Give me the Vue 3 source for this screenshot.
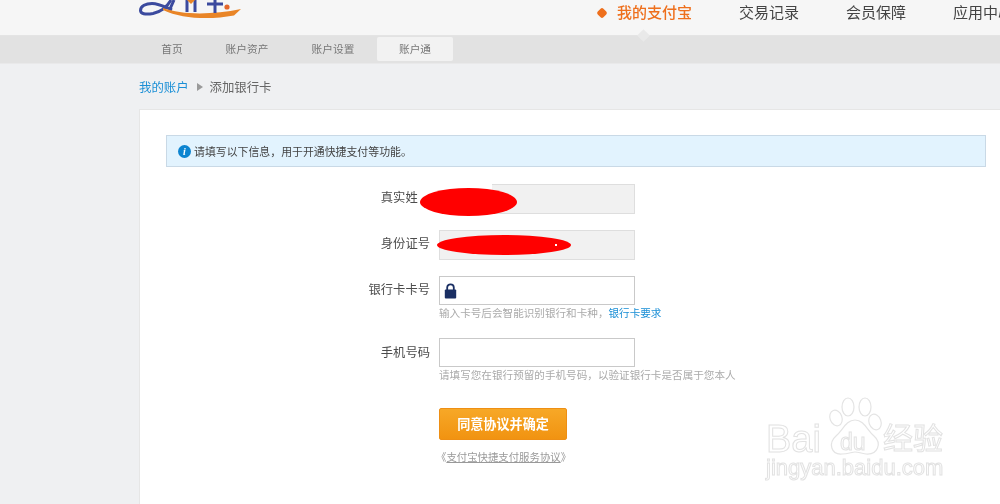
<script setup>
const primaryNav = ['交易记录', '会员保障', '应用中心']
const subNav = [
  { label: '首页', width: 44, gap: 31 },
  { label: '账户资产', width: 44, gap: 42 },
  { label: '账户设置', width: 44, gap: 22 },
  { label: '账户通', width: 76, gap: 0, active: true }
]
</script>

<template>
  <div class="page">
    <header class="top">
      <div class="logo">
        <svg width="104" height="20" viewBox="0 0 104 20">
          <path d="M33 0 C29 7 22 12 15 13.5 C7 15 2.5 13.5 2.5 10.5 C2.5 6 8 3.5 14 3.5 C21 3.5 27 7 34 10" fill="none" stroke="#3b4a9e" stroke-width="3" />
          <path d="M25 8 C44 15 74 15 103 9 L96 15.5 C72 20 44 19 25 10 Z" fill="#e98527" />
          <path d="M36 0 L32 9 M49 0 V12 M57 0 V12 M77 0 V13 M69 4 H85" fill="none" stroke="#3b4a9e" stroke-width="3" />
          <path d="M49 0 L53 4 L57 0 Z" fill="#e98527" />
          <circle cx="89" cy="7" r="2.6" fill="#e4672c" />
        </svg>
      </div>
      <nav class="primary">
        <span class="dot"></span>
        <a class="primary-item current">我的支付宝</a>
        <a v-for="item in primaryNav" :key="item" class="primary-item">{{ item }}</a>
        <i class="caret"></i>
      </nav>
    </header>

    <nav class="sub">
      <a
        v-for="item in subNav"
        :key="item.label"
        class="sub-item"
        :class="{ active: item.active }"
        :style="{ width: item.width + 'px', marginRight: item.gap + 'px' }"
      >{{ item.label }}</a>
    </nav>

    <div class="crumbs">
      <a class="crumb-link">我的账户</a>
      <i class="crumb-arrow"></i>
      <span>添加银行卡</span>
    </div>

    <main class="card">
      <div class="notice">
        <span class="info">i</span>
        <span>请填写以下信息，用于开通快捷支付等功能。</span>
      </div>

      <div class="row first">
        <label>真实姓名</label>
        <div class="field readonly"></div>
      </div>
      <div class="row">
        <label>身份证号</label>
        <div class="field readonly"></div>
      </div>
      <div class="row">
        <label>银行卡卡号</label>
        <div class="stack">
          <div class="field">
            <svg class="lock" width="13" height="16" viewBox="0 0 13 16">
              <path d="M3.2 7 V4.6 C3.2 2.6 4.6 1.4 6.5 1.4 C8.4 1.4 9.8 2.6 9.8 4.6 V7" fill="none" stroke="#1a2f63" stroke-width="1.8" />
              <rect x="0.8" y="6.4" width="11.4" height="9" rx="1" fill="#1a2f63" />
            </svg>
          </div>
          <p class="help">输入卡号后会智能识别银行和卡种，<a>银行卡要求</a></p>
        </div>
      </div>
      <div class="row phone">
        <label>手机号码</label>
        <div class="stack">
          <div class="field"></div>
          <p class="help">请填写您在银行预留的手机号码，以验证银行卡是否属于您本人</p>
        </div>
      </div>
      <div class="actions">
        <button type="button" class="submit">同意协议并确定</button>
        <a class="terms">《<u>支付宝快捷支付服务协议</u>》</a>
      </div>
    </main>

    <div class="erase"></div>
    <div class="scribble one"></div>
    <div class="scribble two"><i></i></div>

    <div class="mark">
      <svg class="paw" width="56" height="60" viewBox="0 0 56 60">
        <g fill="#fff" stroke="#e4e4e4" stroke-width="1.2">
          <ellipse cx="8" cy="21" rx="6" ry="8" transform="rotate(-20 8 21)" />
          <ellipse cx="20" cy="10" rx="6" ry="9" />
          <ellipse cx="37" cy="10" rx="6" ry="9" />
          <ellipse cx="47" cy="25" rx="6" ry="8" transform="rotate(-20 47 25)" />
          <path d="M27 23 C36 23 39 33 46 39 C54 46 50 58 38 57 C32 56 30 55 27 55 C24 55 20 57 14 57 C3 58 0 46 8 39 C15 33 18 23 27 23 Z" />
        </g>
      </svg>
      <span class="mark-bai">Bai</span>
      <span class="mark-du">du</span>
      <span class="mark-cn">经验</span>
      <span class="mark-url">jingyan.baidu.com</span>
    </div>
  </div>
</template>

<style scoped>
.page {
  position: relative;
  width: 1000px;
  height: 504px;
  overflow: hidden;
  background: #eff0f2;
  font-family: "Liberation Sans", "Noto Sans CJK SC", sans-serif;
  color: #555;
  filter: blur(0.3px);
}
.top {
  position: relative;
  height: 35px;
  background: #f6f6f6;
  border-bottom: 1px solid #e4e4e4;
  display: flex;
  justify-content: space-between;
}
.logo {
  margin-left: 138px;
  width: 104px;
  height: 20px;
}
.logo svg {
  display: block;
}
.primary {
  position: relative;
  display: flex;
  align-items: center;
  height: 26px;
  width: 402px;
  flex: none;
  white-space: nowrap;
}
.dot {
  width: 8px;
  height: 8px;
  margin-right: 11px;
  background: #ee6f1c;
  border-radius: 2px;
  transform: rotate(45deg);
  flex: none;
}
.primary-item {
  font-size: 15px;
  line-height: 26px;
  margin-right: 47px;
  color: #444;
  flex: none;
}
.primary-item.current {
  color: #ee6f1c;
  font-weight: 500;
}
.caret {
  position: absolute;
  left: 41px;
  top: 31px;
  width: 9px;
  height: 9px;
  background: #e9e9e9;
  transform: rotate(45deg);
}
.sub {
  background: #e2e2e2;
  border-bottom: 1px solid #e9e9ea;
  display: flex;
  padding-left: 150px;
  align-items: flex-end;
  box-sizing: border-box;
  height: 28px;
}
.sub-item {
  box-sizing: border-box;
  height: 24px;
  margin-bottom: 2px;
  line-height: 24px;
  font-size: 10.7px;
  text-align: center;
  color: #777;
  flex: none;
  white-space: nowrap;
}
.sub-item.active {
  background: #f2f2f2;
  border-radius: 2px;
}
.crumbs {
  display: flex;
  align-items: center;
  height: 45px;
  padding-left: 139px;
  font-size: 12.4px;
  color: #666;
}
.crumb-link {
  color: #1b8fd6;
}
.crumb-arrow {
  width: 0;
  height: 0;
  margin: 0 7px 0 8px;
  border-left: 6px solid #9a9a9a;
  border-top: 4px solid transparent;
  border-bottom: 4px solid transparent;
}
.card {
  position: absolute;
  left: 139px;
  top: 109px;
  right: 0;
  bottom: 0;
  box-sizing: border-box;
  padding: 25px 14px 0 26px;
  background: #fff;
  border-top: 1px solid #e6e6e6;
  border-left: 1px solid #e6e6e6;
}
.notice {
  display: flex;
  align-items: center;
  box-sizing: border-box;
  height: 32px;
  padding-left: 11px;
  gap: 3px;
  background: #e2f3fe;
  border: 1px solid #c9d9e6;
  font-size: 10.9px;
  color: #444;
}
.info {
  width: 13px;
  height: 13px;
  border-radius: 50%;
  background: #0c84d0;
  color: #fff;
  font: italic bold 10px/13px "Liberation Serif", serif;
  text-align: center;
  flex: none;
}
.row {
  display: flex;
  align-items: flex-start;
  margin-top: 16px;
}
.row.first {
  margin-top: 17px;
}
.row.phone {
  margin-top: 16px;
}
.row label {
  width: 264px;
  margin-right: 9px;
  flex: none;
  text-align: right;
  font-size: 12.3px;
  line-height: 28px;
  color: #4c4c4c;
}
.row.first label {
  line-height: 28px;
}
.row.phone label {
  line-height: 30px;
}
.field {
  box-sizing: border-box;
  width: 196px;
  height: 29px;
  background: #fff;
  border: 1px solid #c9c9c9;
  display: flex;
  align-items: center;
}
.field.readonly {
  height: 30px;
  background: #f1f1f1;
  border-color: #dedede;
}
.lock {
  margin-left: 4px;
  display: block;
}
.stack {
  width: 400px;
}
.help {
  margin: 0;
  height: 17px;
  font-size: 10.6px;
  line-height: 17px;
  color: #aaa;
  white-space: nowrap;
}
.help a {
  color: #1b8fd6;
}
.actions {
  margin: 24px 0 0 273px;
  display: flex;
  flex-direction: column;
  align-items: flex-start;
}
.submit {
  box-sizing: border-box;
  width: 128px;
  height: 32px;
  padding: 0 0 2px;
  border: 1px solid #ee8f14;
  border-radius: 2px;
  background: linear-gradient(#f7a827, #f19311);
  color: #fff;
  font-family: inherit;
  font-size: 13.1px;
  font-weight: 700;
}
.terms {
  margin: 10px 0 0 -3px;
  font-size: 10.4px;
  line-height: 16px;
  color: #999;
}
.erase {
  position: absolute;
  left: 418px;
  top: 183px;
  width: 74px;
  height: 33px;
  background: #fff;
}
.scribble {
  position: absolute;
  background: #ff0000;
  border-radius: 50%;
}
.scribble.one {
  left: 420px;
  top: 188px;
  width: 97px;
  height: 28px;
}
.scribble.two {
  left: 437px;
  top: 235px;
  width: 134px;
  height: 20px;
}
.scribble.two i {
  position: absolute;
  left: 118px;
  top: 9px;
  width: 2px;
  height: 2px;
  background: #fff;
}
.mark {
  position: absolute;
  left: 765px;
  top: 397px;
  width: 190px;
  height: 90px;
  color: #fff;
  -webkit-text-stroke: 1px #e2e2e2;
  white-space: nowrap;
}
.paw {
  position: absolute;
  left: 63px;
  top: 0;
}
.mark-bai,
.mark-du,
.mark-cn,
.mark-url {
  position: absolute;
  font-family: "Liberation Sans", "Noto Sans CJK SC", sans-serif;
}
.mark-bai {
  left: 1px;
  top: 23px;
  font-size: 38px;
  font-weight: 400;
  line-height: 38px;
}
.mark-du {
  left: 75px;
  top: 33px;
  font-size: 23px;
  line-height: 24px;
}
.mark-cn {
  left: 118px;
  top: 23px;
  font-size: 30px;
  line-height: 38px;
}
.mark-url {
  left: 1px;
  top: 59px;
  font-size: 22px;
  line-height: 24px;
}
</style>

<style>
html, body {
  margin: 0;
  background: #fff;
}
</style>
